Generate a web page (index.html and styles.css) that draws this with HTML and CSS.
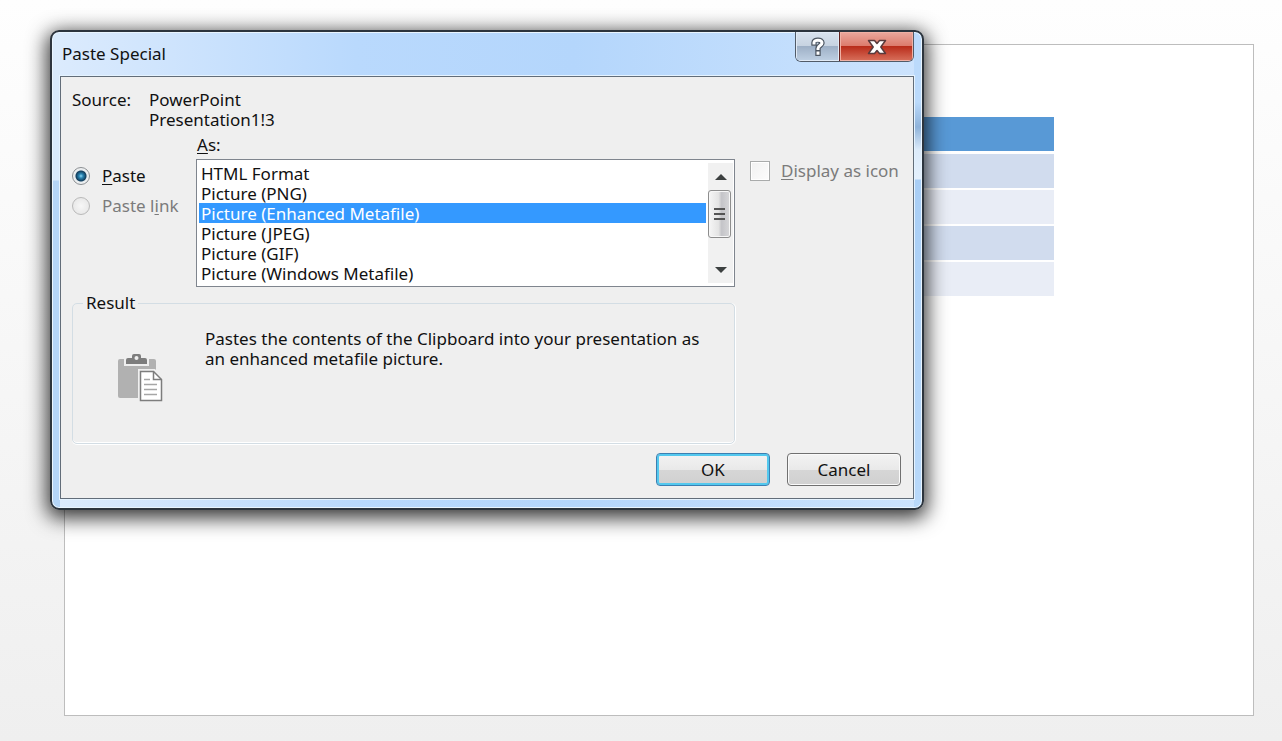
FILE: index.html
```html
<!DOCTYPE html>
<html lang="en">
<head>
<meta charset="utf-8">
<title>Paste Special</title>
<link rel="stylesheet" href="styles.css">
</head>
<body>
<main class="workspace">
  <section class="slide" aria-label="Slide">
    <div class="slide-table">
      <div class="slide-row slide-row-head"></div>
      <div class="slide-row slide-row-odd"></div>
      <div class="slide-row"></div>
      <div class="slide-row slide-row-odd"></div>
      <div class="slide-row"></div>
    </div>
  </section>
</main>

<form class="dialog" role="dialog" aria-labelledby="dialog-title">
  <header class="titlebar">
    <h1 class="title" id="dialog-title">Paste Special</h1>
    <div class="caption-buttons">
      <button type="button" class="caption caption-help" aria-label="Help">
        <svg width="16" height="20" viewBox="0 0 16 20" fill="none" stroke-linecap="square">
          <path d="M4 6V5.500C4 2.300 12 2.300 12 6C12 8.500 8 8.500 8 11.500M8 16V16.200" stroke="#4c5561" stroke-width="5.400"/>
          <path d="M4 6V5.500C4 2.300 12 2.300 12 6C12 8.500 8 8.500 8 11.500M8 16V16.200" stroke="#fff" stroke-width="3"/>
        </svg>
      </button>
      <button type="button" class="caption caption-close" aria-label="Close">
        <svg width="20" height="16" viewBox="0 0 20 16">
          <path d="M1.500 1.500H7.500L10 4.500L12.500 1.500H18.500L13.800 8L18.500 14.500H12.500L10 11.500L7.500 14.500H1.500L6.200 8Z" fill="#fff" stroke="#593a3c" stroke-width="1.500" stroke-linejoin="round"/>
        </svg>
      </button>
    </div>
  </header>

  <div class="client">
    <dl class="source">
      <dt>Source:</dt>
      <dd>PowerPoint</dd>
      <dd>Presentation1!3</dd>
    </dl>

    <div class="options">
      <div class="modes">
        <label class="choice"><input type="radio" name="mode" class="radio" checked><span><u>P</u>aste</span></label>
        <label class="choice disabled"><input type="radio" name="mode" class="radio" disabled><span>Paste l<u>i</u>nk</span></label>
      </div>

      <div class="format">
        <label for="format-list" class="format-label"><u>A</u>s:</label>
        <div class="listbox">
          <select id="format-list" class="list" size="6">
            <option>HTML Format</option>
            <option>Picture (PNG)</option>
            <option selected>Picture (Enhanced Metafile)</option>
            <option>Picture (JPEG)</option>
            <option>Picture (GIF)</option>
            <option>Picture (Windows Metafile)</option>
          </select>
          <div class="scrollbar">
            <button type="button" class="scroll-arrow" aria-label="Scroll up"><svg width="12" height="6" viewBox="0 0 12 6"><path d="M0 6L6 0L12 6Z" fill="#3c4040"/></svg></button>
            <div class="scroll-thumb"><i></i><i></i><i></i></div>
            <button type="button" class="scroll-arrow scroll-down" aria-label="Scroll down"><svg width="12" height="6" viewBox="0 0 12 6"><path d="M0 0H12L6 6Z" fill="#3c4040"/></svg></button>
          </div>
        </div>
      </div>

      <label class="choice icon-choice disabled"><input type="checkbox" class="checkbox" disabled><span><u>D</u>isplay as icon</span></label>
    </div>

    <fieldset class="result">
      <legend>Result</legend>
      <div class="result-body">
        <svg class="result-icon" width="46" height="50" viewBox="0 0 46 50">
          <rect x="1" y="6" width="38" height="39" rx="2" fill="#b1b1b1"/>
          <path d="M7 5H32V13H7Z" fill="#efefef"/>
          <path d="M9 7Q9 5 11 5H15V3Q15 1 17 1H22Q24 1 24 3V5H28Q30 5 30 7V11H9Z" fill="#7d7d7d"/>
          <circle cx="19.500" cy="5" r="2" fill="#efefef"/>
          <path d="M21 16H38L46 24V50H21Z" fill="#efefef"/>
          <path d="M23.500 18.500H36.500L44.500 26.500V47.500H23.500Z" fill="#fff" stroke="#7d7d7d" stroke-width="1.500"/>
          <path d="M36.500 18.500V26.500H44.500" fill="none" stroke="#7d7d7d" stroke-width="1.500"/>
          <path d="M27 26.500H33M27 31.500H40M27 36.500H40M27 41.500H40" stroke="#a6a6a6" stroke-width="1.500"/>
        </svg>
        <p class="result-text">Pastes the contents of the Clipboard into your presentation as an enhanced metafile picture.</p>
      </div>
    </fieldset>

    <footer class="actions">
      <button type="submit" class="button button-default">OK</button>
      <button type="button" class="button">Cancel</button>
    </footer>
  </div>
</form>
</body>
</html>
```
FILE: styles.css
```css
* {
  box-sizing: border-box;
}

body {
  margin: 0;
  font: 17px/20px "Noto Sans", "Open Sans", sans-serif;
  color: #111;
  background: #efefef;
}

button,
select {
  font: inherit;
  color: inherit;
}

u {
  text-decoration-thickness: 1px;
  text-underline-offset: 2px;
}

.workspace {
  display: flex;
  min-height: 100vh;
  padding: 44px 28px 25px 64px;
  background: linear-gradient(#fefefe, #efefef);
}

.slide {
  flex: 1;
  padding: 72px 199px;
  background: #fff;
  border: 1px solid #bdbdbd;
}

.slide-table {
  display: grid;
  gap: 2px;
}

.slide-row {
  height: 34px;
  background: #e9edf6;
}

.slide-row-head {
  margin-bottom: 1px;
  background: #5899d6;
}

.slide-row-odd {
  background: #d1dcee;
}

.dialog {
  position: absolute;
  left: 50px;
  top: 30px;
  width: 874px;
  padding: 0 8px 9px;
  border: 2px solid #2c343d;
  border-radius: 9px;
  background:
    linear-gradient(#bbdafb 0, #bbdafb 70px, #8fb3da 95px, #dcebfa 118px, #e4f0fc 147px, #a9cef5 148px, #b9d9fa 100%) right / 8px 100% no-repeat,
    linear-gradient(#d9eafc 0, #d9eafc 148px, #b4d5f8 149px) left / 8px 100% no-repeat,
    linear-gradient(90deg, #dcebfd, #b9d9fd 35%, #b4d6fc 60%, #cce3fd);
  box-shadow:
    inset 0 0 0 1px #e9f5ff,
    0 5px 20px 3px rgba(0, 0, 0, 0.8);
}

.titlebar {
  display: flex;
  justify-content: space-between;
  align-items: flex-start;
  height: 44px;
}

.title {
  margin: 0;
  padding: 12px 2px;
  font-size: 17px;
  font-weight: 400;
}

.caption-buttons {
  display: flex;
  border: 1px solid #515b68;
  border-top: 0;
  border-radius: 0 0 6px 6px;
  overflow: hidden;
}

.caption {
  display: grid;
  place-items: center;
  height: 29px;
  padding: 0;
  border: 0;
}

.caption-help {
  width: 43px;
  background: linear-gradient(#d8e2ee, #c7d3e1 48%, #9eb0c6 50%, #bfd0e3);
  box-shadow: inset 0 0 0 1px #e1eaf5;
}

.caption-close {
  width: 74px;
  border-left: 1px solid #642522;
  background: linear-gradient(#eba89d, #dc7b6c 48%, #b92d1b 50%, #d8705c);
  box-shadow: inset 0 0 0 1px #efb1a5;
}

.client {
  padding: 13px 12px 12px 11px;
  background: #efefef;
  border: 1px solid #626d79;
  box-shadow: 0 0 0 1px #e5f3ff;
}

.source {
  display: grid;
  grid-template-columns: 77px 1fr;
  margin: 0;
}

.source dd {
  grid-column: 2;
  margin: 0;
}

.options {
  display: grid;
  grid-template-columns: 124px 1fr 166px;
  margin-top: 5px;
}

.modes {
  display: grid;
  gap: 10px;
  align-content: start;
  padding-top: 31px;
}

.choice {
  display: flex;
  align-items: center;
  gap: 12px;
  height: 20px;
  white-space: nowrap;
}

.disabled {
  color: #7b7b7b;
}

.radio {
  appearance: none;
  width: 18px;
  height: 18px;
  margin: 0;
  border: 1px solid #8b8f93;
  border-radius: 50%;
  background: radial-gradient(#fff 50%, #d4d6d8);
}

.radio:checked {
  background: radial-gradient(circle at center, #8ed8f3 0, #2a86b4 2px, #123d5c 5px, #e4eaed 6px, #f3f3f3 8px);
}

.radio:disabled {
  border-color: #b9b9b9;
  background: radial-gradient(#f7f7f7, #e3e3e3);
}

.format-label {
  display: block;
  padding-left: 1px;
}

.listbox {
  display: flex;
  margin-top: 4px;
  padding: 3px 1px 3px 2px;
  background: #fff;
  border: 1px solid #7f858e;
}

.list {
  flex: 1;
  min-width: 0;
  height: 120px;
  padding: 0;
  border: 0;
  outline: 0;
  overflow: hidden;
  background: #fff;
}

.list option {
  display: flex;
  align-items: center;
  height: 20px;
  min-height: 20px;
  padding: 0 2px;
}

.list option:checked {
  background: linear-gradient(#3499ff, #3499ff);
  -webkit-text-fill-color: #fff;
}

.scrollbar {
  display: flex;
  flex-direction: column;
  width: 25px;
  margin-left: 2px;
  background: #f1f1f1;
}

.scroll-arrow {
  display: grid;
  place-items: center;
  height: 27px;
  padding: 0;
  border: 0;
  background: none;
}

.scroll-down {
  margin-top: auto;
}

.scroll-thumb {
  display: grid;
  align-content: center;
  justify-content: center;
  gap: 3px;
  width: 23px;
  height: 48px;
  border: 1px solid #8d8d8d;
  border-radius: 3px;
  background: linear-gradient(90deg, #f6f6f6, #e4e4e4 45%, #c4c4c8 60%, #d8d8da);
  box-shadow: inset 0 0 0 1px #f7f7f7;
}

.scroll-thumb i {
  width: 11px;
  height: 2px;
  background: #555;
}

.icon-choice {
  gap: 11px;
  margin: 26px 0 0 15px;
}

.checkbox {
  appearance: none;
  flex: none;
  width: 20px;
  height: 20px;
  margin: 0;
  border: 1px solid #a9abab;
  background: linear-gradient(135deg, #f1f1f1, #fdfdfd);
  box-shadow: inset 0 0 0 1px #fff;
}

.result {
  min-width: 0;
  min-height: 151px;
  margin: 6px 166px 0 0;
  padding: 16px 20px 16px 10px;
  border: 1px solid #d3dde4;
  border-radius: 5px;
  box-shadow: inset 0 -1px 0 #fff, 1px 0 0 #fff, 0 1px 0 #fff;
}

.result legend {
  padding: 0 3px;
}

.result-body {
  display: flex;
}

.result-icon {
  flex: none;
  margin: 24px 42px 0 34px;
}

.result-text {
  margin: 0;
}

.actions {
  display: flex;
  justify-content: flex-end;
  gap: 17px;
  margin-top: 9px;
}

.button {
  width: 114px;
  height: 33px;
  padding: 0;
  border: 1px solid #707070;
  border-radius: 4px;
  background: linear-gradient(#f3f3f3, #e9e9e9 50%, #d6d6d6 51%, #d0d0d0);
  box-shadow: inset 0 0 0 1px #fafafa;
}

.button-default {
  border-color: #3c7fb1;
  box-shadow: inset 0 0 0 2px #53c8ee;
}
```
